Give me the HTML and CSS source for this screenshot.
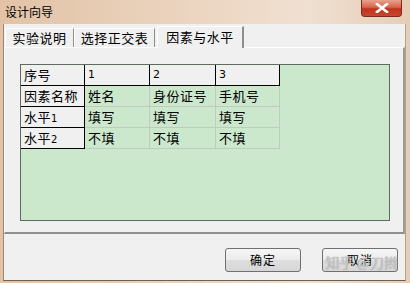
FILE: index.html
```html
<!DOCTYPE html>
<html>
<head>
<meta charset="utf-8">
<link rel="stylesheet" href="styles.css">
</head>
<body>
<div class="window">
  <div class="titlebar">
    <span class="title">设计向导</span>
    <div class="close"><svg width="14" height="10" viewBox="0 0 14 10"><path d="M2 1 L12 9 M12 1 L2 9" stroke="#fff" stroke-width="2.6" stroke-linecap="square"/></svg></div>
  </div>
  <div class="client">
    <div class="tabs">
      <div class="tab t1">实验说明</div>
      <div class="tab t2">选择正交表</div>
      <div class="tab sel">因素与水平</div>
    </div>
    <div class="panel">
      <div class="grid-area">
        <div class="grid">
          <div class="c h">序号</div><div class="c h num">1</div><div class="c h num">2</div><div class="c h num">3</div>
          <div class="c h">因素名称</div><div class="c d">姓名</div><div class="c d">身份证号</div><div class="c d">手机号</div>
          <div class="c h">水平<span class="n">1</span></div><div class="c d">填写</div><div class="c d">填写</div><div class="c d">填写</div>
          <div class="c h">水平<span class="n">2</span></div><div class="c d">不填</div><div class="c d">不填</div><div class="c d">不填</div>
        </div>
      </div>
    </div>
    <div class="buttons">
      <div class="btn">确定</div>
      <div class="btn">取消</div>
      <div class="watermark">知乎 @刀辫</div>
    </div>
  </div>
</div>
</body>
</html>
```
FILE: styles.css
```css
* { box-sizing: border-box; }
html, body { margin: 0; padding: 0; }
body { width: 410px; height: 283px; overflow: hidden; font-family: "Noto Sans CJK SC", "DejaVu Sans", sans-serif; }
.window {
  width: 410px; height: 283px;
  background: linear-gradient(90deg, #e2c3a6 0%, #ecd6c2 50%, #f0e0d2 75%, #e6cdb6 100%);
  display: flex; flex-direction: column;
}
.titlebar {
  height: 24px; display: flex; justify-content: space-between; align-items: flex-start;
  padding-left: 5px; padding-right: 8px;
}
.title { font-size: 12px; line-height: 12px; margin-top: 6px; color: #000; }
.close {
  width: 41px; height: 17px; margin-top: 0;
  background: linear-gradient(180deg, #e9a38e 0%, #d8634a 45%, #c0331c 55%, #c8462e 100%);
  border: 1px solid #7a2b1c; border-top: none;
  border-radius: 0 0 4px 4px;
  display: flex; align-items: center; justify-content: center;
}
.client {
  margin: 0 4px 0 3px; height: 257px;
  background: #f0f0f0;
  border-left: 1px solid #9c8673;
  border-right: 1px solid #b7a08b;
  border-bottom: 1px solid #6c6155;
  display: flex; flex-direction: column;
}
.tabs { height: 23px; display: flex; align-items: flex-end; padding-left: 1px; }
.tab {
  height: 19px; font-size: 13px; letter-spacing: 0.5px; line-height: 18px; color: #000;
  border-top: 1px solid #fff; border-left: 1px solid #fff; border-right: 1px solid #8e8e8e;
  text-align: center; background: #f0f0f0;
}
.t1 { width: 69px; }
.t2 { width: 81px; }
.sel { width: 87px; height: 22px; margin-left: 2px; line-height: 20px; margin-bottom: -1px; position: relative; z-index: 1; border-right: 2px solid #8e8e8e; }
.panel {
  height: 187px;
  border-top: 1px solid #fff; border-left: 1px solid #fff;
  border-right: 2px solid #9a9a9a; border-bottom: 2px solid #8f8f8f;
  padding: 16px 0 0 15px;
}
.grid-area {
  width: 370px; height: 157px;
  background: #cbe8cc;
  border: 1px solid #5f6b5f;
}
.grid {
  display: grid;
  grid-template-columns: 64px 65px 66px 64px;
  grid-auto-rows: 21px;
  width: 259px;
}
.c {
  font-size: 13px; letter-spacing: 0.5px; line-height: 20px; padding-left: 3px;
  border-right: 1px solid #c0cac0; border-bottom: 1px solid #c0cac0; color: #000;
  white-space: nowrap;
}
.h { background: #f0f0f0; border-right-color: #000; border-bottom-color: #000; }
.d { background: #cbe8cc; }
.num { font-size: 11px; font-family: "DejaVu Sans", sans-serif; }
.n { font-size: 10px; font-family: "DejaVu Sans", sans-serif; }
.buttons {
  flex: 1; display: flex; justify-content: flex-end; align-items: flex-start;
  padding: 14px 7px 0 0; gap: 21px; position: relative;
}
.btn {
  width: 76px; height: 24px;
  border: 1px solid #707070; border-radius: 3px;
  background: linear-gradient(180deg, #f6f6f6 0%, #ebebeb 50%, #dedede 51%, #d6d6d6 100%);
  font-size: 12px; line-height: 22px; text-align: center; color: #000; letter-spacing: 1px;
}
.watermark {
  position: absolute; right: 7px; top: 18px;
  font-size: 14px; color: rgba(210,210,210,0.8);
  text-shadow: 0 0 1px #888;
  letter-spacing: 0px;
  pointer-events: none;
}
```
